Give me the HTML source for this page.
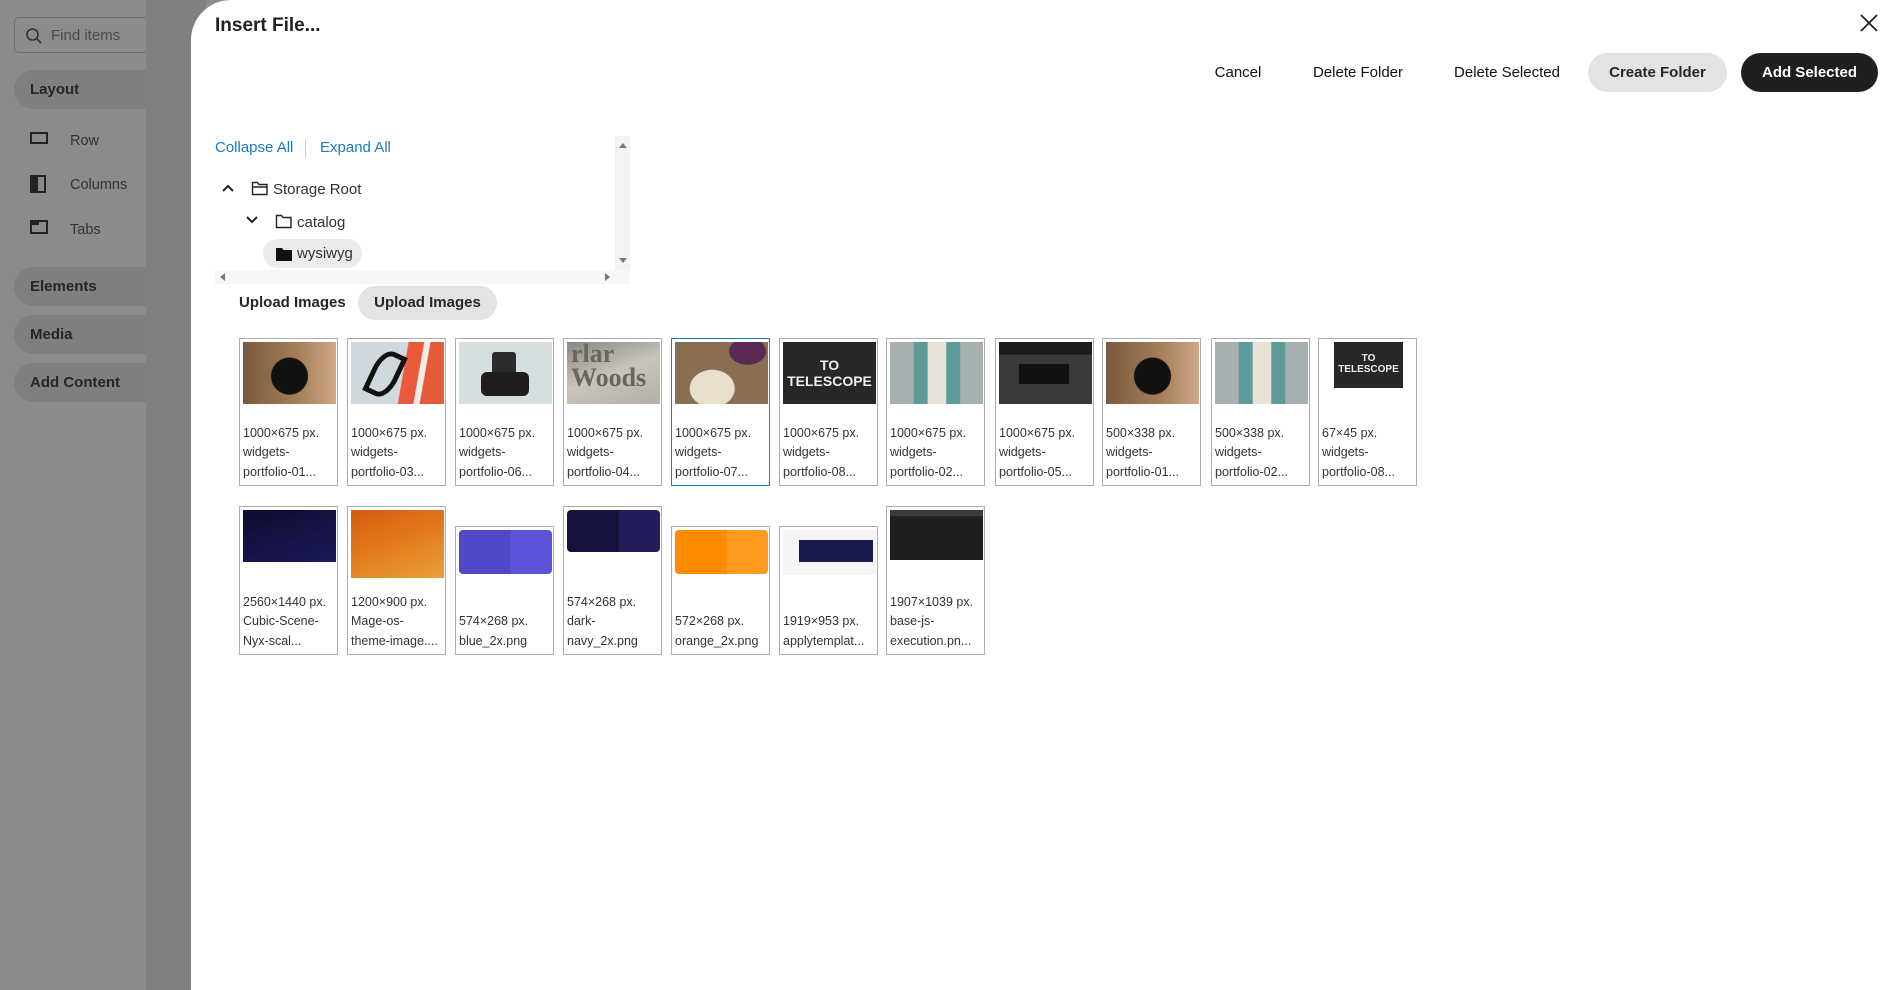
<!DOCTYPE html>
<html><head><meta charset="utf-8"><style>
*{box-sizing:border-box;margin:0;padding:0}
body{width:1891px;height:990px;overflow:hidden;background:#8b8b8b;font-family:"Liberation Sans",sans-serif;color:#222;position:relative}
.abs{position:absolute}
.strip{left:146px;top:0;width:60px;height:990px;background:#808080}
.search{left:14px;top:17px;width:132px;height:36px;border:1px solid #6e6e6e;border-radius:5px 0 0 5px;border-right:none}
.search span{position:absolute;left:36px;top:9px;font-size:15px;color:#4a4a4a}
.pill{left:14px;width:132px;height:39px;background:#7f7f7f;border-radius:20px 0 0 20px;font-size:15px;font-weight:bold;color:#262626;padding:11px 0 0 16px}
.item{left:30px;font-size:14.5px;color:#333}
.item i{position:absolute;left:0;top:0}
.item span{position:absolute;left:54px;top:-1px;white-space:nowrap}
.modal{left:191px;top:0;width:1700px;height:990px;background:#fff;border-top-left-radius:40px}
.title{left:215px;top:15px;font-size:19px;font-weight:bold;color:#222}
.btn{top:53px;height:39px;font-size:15px;font-weight:bold;color:#262626;line-height:39px;text-align:center;border-radius:20px}
.link{font-size:15px;color:#1979c3;top:139px}
.tree{font-size:15px;color:#333}
.card{position:absolute;width:99px;border:1px solid #adadad;background:#fff}
.card .im{position:absolute;left:3px;top:3px;width:93px}
.card .tx{position:absolute;left:3px;right:1px;bottom:3px;font-size:12.5px;line-height:19.5px;color:#333;white-space:nowrap;overflow:hidden}
</style></head><body>
<div class="abs strip"></div>
<div class="abs search"><svg class="abs" style="left:10px;top:9px" width="18" height="18" viewBox="0 0 18 18"><circle cx="7.5" cy="7.5" r="5.5" fill="none" stroke="#333" stroke-width="1.6"/><path d="M11.5 11.5L16 16" stroke="#333" stroke-width="1.8"/></svg><span>Find items</span></div>
<div class="abs pill" style="top:70px">Layout</div>
<div class="abs item" style="top:132px"><i><svg width="18" height="14"><rect x="1" y="1" width="16" height="10" fill="none" stroke="#222" stroke-width="2"/></svg></i><span style="left:40px;top:1px">Row</span></div>
<div class="abs item" style="top:175px"><i><svg width="18" height="18"><rect x="1" y="1" width="14" height="16" fill="none" stroke="#222" stroke-width="2"/><rect x="1" y="1" width="7" height="16" fill="#222"/></svg></i><span style="left:40px;top:2px">Columns</span></div>
<div class="abs item" style="top:220px"><i><svg width="18" height="16"><rect x="1" y="1" width="16" height="12" fill="none" stroke="#222" stroke-width="2"/><rect x="1" y="1" width="8" height="4" fill="#222"/></svg></i><span style="left:40px;top:2px">Tabs</span></div>
<div class="abs pill" style="top:267px">Elements</div>
<div class="abs pill" style="top:315px">Media</div>
<div class="abs pill" style="top:363px">Add Content</div>

<div class="abs modal"></div>
<div class="abs title">Insert File...</div>
<svg class="abs" style="left:1860px;top:14px" width="18" height="18" viewBox="0 0 18 18"><path d="M1 1L17 17M17 1L1 17" stroke="#222" stroke-width="1.8"/></svg>
<div class="abs btn" style="left:1198px;width:80px;font-weight:normal;color:#111">Cancel</div>
<div class="abs btn" style="left:1300px;width:116px;font-weight:normal;color:#111">Delete Folder</div>
<div class="abs btn" style="left:1436px;width:142px;font-weight:normal;color:#111">Delete Selected</div>
<div class="abs btn" style="left:1588px;width:139px;background:#e3e3e3">Create Folder</div>
<div class="abs btn" style="left:1741px;width:137px;background:#1f1f1f;color:#fff">Add Selected</div>

<div class="abs" style="left:615px;top:136px;width:15px;height:134px;background:#f3f3f3"></div>
<div class="abs" style="left:215px;top:270px;width:415px;height:14px;background:#f7f7f7"></div>
<div class="abs" style="left:619px;top:143px;width:0;height:0;border:4px solid transparent;border-bottom:5px solid #777;border-top:none"></div>
<div class="abs" style="left:619px;top:258px;width:0;height:0;border:4px solid transparent;border-top:5px solid #777;border-bottom:none"></div>
<div class="abs" style="left:220px;top:273px;border:4px solid transparent;border-right:5px solid #777;border-left:none"></div>
<div class="abs" style="left:605px;top:273px;border:4px solid transparent;border-left:5px solid #777;border-right:none"></div>

<div class="abs link" style="left:215px">Collapse All</div>
<div class="abs" style="left:305px;top:139px;width:1px;height:19px;background:#ccc"></div>
<div class="abs link" style="left:320px">Expand All</div>

<svg class="abs" style="left:221px;top:183px" width="14" height="10"><path d="M2 8L7 3L12 8" fill="none" stroke="#222" stroke-width="2"/></svg>
<svg class="abs" style="left:251px;top:180px" width="18" height="16" viewBox="0 0 18 16"><path d="M1.5 2.5h5l1.5 2h8v10h-14.5z M1.5 7h15" fill="none" stroke="#222" stroke-width="1.4"/></svg>
<div class="abs tree" style="left:273px;top:181px">Storage Root</div>
<svg class="abs" style="left:245px;top:215px" width="14" height="10"><path d="M2 2L7 7L12 2" fill="none" stroke="#222" stroke-width="2"/></svg>
<svg class="abs" style="left:275px;top:213px" width="18" height="16" viewBox="0 0 18 16"><path d="M1.5 2.5h5l1.5 2h8v10h-14.5z" fill="none" stroke="#222" stroke-width="1.4"/></svg>
<div class="abs tree" style="left:297px;top:214px">catalog</div>
<div class="abs" style="left:263px;top:239px;width:99px;height:29px;background:#ebebeb;border-radius:15px"></div>
<svg class="abs" style="left:275px;top:246px" width="18" height="16" viewBox="0 0 18 16"><path d="M1 2h6l1.5 2h8.5v11h-16z" fill="#111"/></svg>
<div class="abs tree" style="left:297px;top:245px">wysiwyg</div>

<div class="abs" style="left:239px;top:294px;font-size:15px;font-weight:bold;color:#262626">Upload Images</div>
<div class="abs btn" style="left:358px;top:286px;width:139px;height:34px;line-height:34px;background:#e3e3e3;border-radius:17px">Upload Images</div>

<!-- row 1 -->
<div class="card" style="left:239px;top:338px;height:148px"><div class="im" style="height:62px;background:radial-gradient(circle at 50% 55%,#111 0 18px,transparent 19px),linear-gradient(90deg,#7a5a3d,#a47f5a 60%,#d2a888)"></div><div class="tx">1000×675 px.<br>widgets-<br>portfolio-01...</div></div>
<div class="card" style="left:347px;top:338px;height:148px"><div class="im" style="height:62px;background:linear-gradient(100deg,#cfd8dc 0 55%,#e9593a 56% 70%,#f0eeea 71% 76%,#e55a3a 77%)"><div style="position:absolute;left:20px;top:8px;width:28px;height:48px;border:5px solid #111;border-radius:50% 0 50% 0;transform:rotate(25deg)"></div></div><div class="tx">1000×675 px.<br>widgets-<br>portfolio-03...</div></div>
<div class="card" style="left:455px;top:338px;height:148px"><div class="im" style="height:62px;background:#d6dfdf"><div style="position:absolute;left:33px;top:10px;width:24px;height:24px;background:#2b2b2b;border-radius:3px"></div><div style="position:absolute;left:22px;top:30px;width:48px;height:24px;background:#1e1e1e;border-radius:6px"></div></div><div class="tx">1000×675 px.<br>widgets-<br>portfolio-06...</div></div>
<div class="card" style="left:563px;top:338px;height:148px"><div class="im" style="height:62px;background:linear-gradient(160deg,#8a8580,#c9c4bc 50%,#b3aea6);font:bold 26px 'Liberation Serif',serif;color:#6a655e;overflow:hidden;line-height:24px;padding-left:4px">rlar<br>Woods</div><div class="tx">1000×675 px.<br>widgets-<br>portfolio-04...</div></div>
<div class="card" style="left:671px;top:338px;height:148px;border-color:#1979c3"><div class="im" style="height:62px;background:radial-gradient(ellipse at 40% 75%,#e8e0cc 0 22px,transparent 23px),radial-gradient(ellipse at 78% 15%,#5a2850 0 18px,transparent 19px),#8a6e52"></div><div class="tx">1000×675 px.<br>widgets-<br>portfolio-07...</div></div>
<div class="card" style="left:779px;top:338px;height:148px"><div class="im" style="height:62px;background:#272727;color:#eee;font:bold 14px 'Liberation Sans Narrow','Liberation Sans',sans-serif;text-align:center;line-height:16px;padding-top:15px">TO<br>TELESCOPE</div><div class="tx">1000×675 px.<br>widgets-<br>portfolio-08...</div></div>
<div class="card" style="left:886px;top:338px;height:148px"><div class="im" style="height:62px;background:linear-gradient(90deg,#a7b0b0 0 25%,#5f9a9a 26% 40%,#e8e2d6 41% 60%,#5f9a9a 61% 75%,#a7b0b0 76%)"></div><div class="tx">1000×675 px.<br>widgets-<br>portfolio-02...</div></div>
<div class="card" style="left:995px;top:338px;height:148px"><div class="im" style="height:62px;background:linear-gradient(180deg,#1c1c1c 0 20%,#3a3a3a 21% 100%)"><div style="position:absolute;left:20px;top:22px;width:50px;height:20px;background:#111"></div></div><div class="tx">1000×675 px.<br>widgets-<br>portfolio-05...</div></div>
<div class="card" style="left:1102px;top:338px;height:148px"><div class="im" style="height:62px;background:radial-gradient(circle at 50% 55%,#111 0 18px,transparent 19px),linear-gradient(90deg,#7a5a3d,#a47f5a 60%,#d2a888)"></div><div class="tx">500×338 px.<br>widgets-<br>portfolio-01...</div></div>
<div class="card" style="left:1211px;top:338px;height:148px"><div class="im" style="height:62px;background:linear-gradient(90deg,#a7b0b0 0 25%,#5f9a9a 26% 40%,#e8e2d6 41% 60%,#5f9a9a 61% 75%,#a7b0b0 76%)"></div><div class="tx">500×338 px.<br>widgets-<br>portfolio-02...</div></div>
<div class="card" style="left:1318px;top:338px;height:148px"><div class="im" style="left:15px;width:69px;height:46px;background:#272727;color:#eee;font:bold 10px 'Liberation Sans',sans-serif;text-align:center;line-height:11px;padding-top:11px">TO<br>TELESCOPE</div><div class="tx">67×45 px.<br>widgets-<br>portfolio-08...</div></div>

<!-- row 2 -->
<div class="card" style="left:239px;top:506px;height:149px"><div class="im" style="height:52px;background:linear-gradient(160deg,#0d0b2e,#1c1a5a)"></div><div class="tx">2560×1440 px.<br>Cubic-Scene-<br>Nyx-scal...</div></div>
<div class="card" style="left:347px;top:506px;height:149px"><div class="im" style="height:68px;background:linear-gradient(160deg,#d55a10,#e47f1f 55%,#e9a13a)"></div><div class="tx">1200×900 px.<br>Mage-os-<br>theme-image....</div></div>
<div class="card" style="left:455px;top:526px;height:129px"><div class="im" style="height:44px;border-radius:4px;background:linear-gradient(90deg,#5048c4 0 55%,#5c55da 56%)"></div><div class="tx">574×268 px.<br>blue_2x.png</div></div>
<div class="card" style="left:563px;top:506px;height:149px"><div class="im" style="height:42px;border-radius:4px;background:linear-gradient(90deg,#15123f 0 55%,#221d5a 56%)"></div><div class="tx">574×268 px.<br>dark-<br>navy_2x.png</div></div>
<div class="card" style="left:671px;top:526px;height:129px"><div class="im" style="height:44px;border-radius:4px;background:linear-gradient(90deg,#ff8a00 0 55%,#ff9b20 56%)"></div><div class="tx">572×268 px.<br>orange_2x.png</div></div>
<div class="card" style="left:779px;top:526px;height:129px"><div class="im" style="height:45px;background:#f4f4f6"><div style="position:absolute;left:16px;top:10px;width:74px;height:22px;background:#1c1b4d"></div></div><div class="tx">1919×953 px.<br>applytemplat...</div></div>
<div class="card" style="left:886px;top:506px;height:149px"><div class="im" style="height:50px;background:linear-gradient(180deg,#3a3a3a 0 12%,#1f1f22 13%)"></div><div class="tx">1907×1039 px.<br>base-js-<br>execution.pn...</div></div>
</body></html>
